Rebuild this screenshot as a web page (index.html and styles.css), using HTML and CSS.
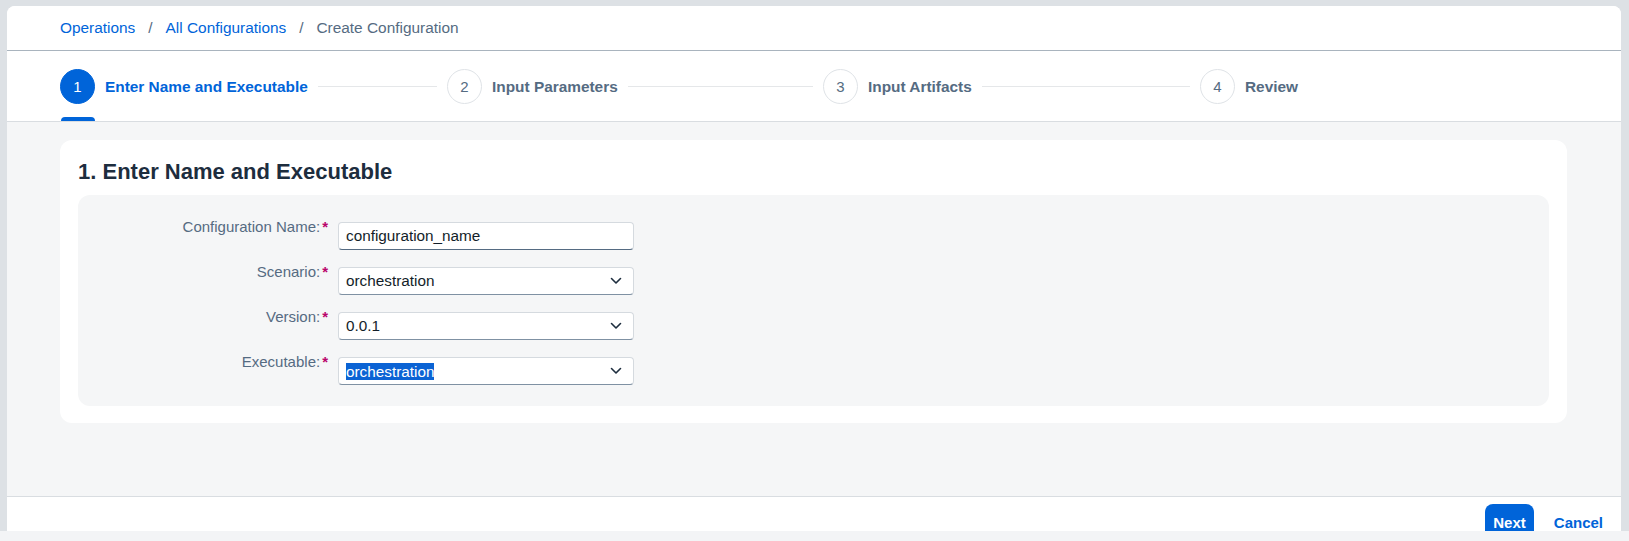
FILE: index.html
```html
<!DOCTYPE html>
<html lang="en">
<head>
<meta charset="utf-8">
<title>Create Configuration</title>
<link rel="stylesheet" href="styles.css">
</head>
<body>
<div class="screen">
  <div class="window">
    <div class="panel">
      <header class="head">
        <nav class="crumbs">
          <a class="crumb-link">Operations</a><span class="sep">/</span><a class="crumb-link">All Configurations</a><span class="sep">/</span><span class="crumb-current">Create Configuration</span>
        </nav>
        <div class="stepper">
          <div class="step active">
            <span class="num">1</span><span class="step-label">Enter Name and Executable</span><span class="line"></span>
            <span class="indicator"></span>
          </div>
          <div class="step">
            <span class="num">2</span><span class="step-label">Input Parameters</span><span class="line"></span>
          </div>
          <div class="step">
            <span class="num">3</span><span class="step-label">Input Artifacts</span><span class="line"></span>
          </div>
          <div class="step">
            <span class="num">4</span><span class="step-label">Review</span>
          </div>
        </div>
      </header>
      <main class="content">
        <section class="card">
          <h2 class="title">1. Enter Name and Executable</h2>
          <div class="form">
            <div class="row">
              <label class="lbl">Configuration Name:<span class="req">*</span></label>
              <div class="field input"><span class="val">configuration_name</span></div>
            </div>
            <div class="row">
              <label class="lbl">Scenario:<span class="req">*</span></label>
              <div class="field select"><span class="val">orchestration</span>
                <svg class="chev" width="12" height="8" viewBox="0 0 12 8"><path d="M1.5 1.5 L6 6 L10.5 1.5" fill="none" stroke="#1d2d3e" stroke-width="1.6" stroke-linecap="round" stroke-linejoin="round"/></svg>
              </div>
            </div>
            <div class="row">
              <label class="lbl">Version:<span class="req">*</span></label>
              <div class="field select"><span class="val">0.0.1</span>
                <svg class="chev" width="12" height="8" viewBox="0 0 12 8"><path d="M1.5 1.5 L6 6 L10.5 1.5" fill="none" stroke="#1d2d3e" stroke-width="1.6" stroke-linecap="round" stroke-linejoin="round"/></svg>
              </div>
            </div>
            <div class="row">
              <label class="lbl">Executable:<span class="req">*</span></label>
              <div class="field select"><span class="val selected">orchestration</span>
                <svg class="chev" width="12" height="8" viewBox="0 0 12 8"><path d="M1.5 1.5 L6 6 L10.5 1.5" fill="none" stroke="#1d2d3e" stroke-width="1.6" stroke-linecap="round" stroke-linejoin="round"/></svg>
              </div>
            </div>
          </div>
        </section>
      </main>
      <footer class="foot">
        <button class="btn btn-primary">Next</button>
        <button class="btn btn-ghost">Cancel</button>
      </footer>
    </div>
  </div>
  <div class="bottom-strip"></div>
</div>
</body>
</html>
```
FILE: styles.css
```css
* { box-sizing: border-box; }

html, body {
  margin: 0;
  padding: 0;
}

body {
  font-family: "Liberation Sans", Arial, sans-serif;
  background: #f3f4f6;
  color: #131e29;
}

.screen {
  width: 1629px;
  height: 541px;
  overflow: hidden;
  display: flex;
  flex-direction: column;
}

.window {
  height: 531px;
  background: #dde1e5;
  padding: 6px 8px 0 7px;
  flex-shrink: 0;
}

.bottom-strip {
  flex: 1;
  background: #f3f4f6;
}

.panel {
  height: 525px;
  background: #ffffff;
  border-radius: 8px 8px 0 0;
  overflow: hidden;
  display: flex;
  flex-direction: column;
}

/* Header */
.head {
  background: #ffffff;
  border-bottom: 1px solid #d9dde1;
  flex-shrink: 0;
}

.crumbs {
  height: 45px;
  border-bottom: 1px solid #a9b4be;
  display: flex;
  align-items: center;
  padding: 0 53px 1px 53px;
  font-size: 15.4px;
}

.crumb-link {
  color: #0064d9;
  text-decoration: none;
}

.sep {
  color: #556b82;
  margin: 0 13px;
}

.crumb-current {
  color: #556b82;
}

.stepper {
  height: 70px;
  padding: 0 53px;
  display: grid;
  grid-template-columns: 387px 376px 377px 1fr;
}

.step {
  position: relative;
  display: flex;
  align-items: center;
  height: 70px;
  padding-top: 1px;
}

.num {
  width: 35px;
  height: 35px;
  border-radius: 50%;
  border: 1px solid #dfe3e7;
  display: flex;
  align-items: center;
  justify-content: center;
  font-size: 15px;
  color: #556b82;
  flex-shrink: 0;
}

.step-label {
  margin-left: 10px;
  font-size: 15.4px;
  font-weight: bold;
  color: #556b82;
  white-space: nowrap;
}

.line {
  flex: 1;
  height: 1px;
  background: #e5e7e9;
  margin: 0 10px;
}

.step.active .num {
  background: #0064d9;
  border-color: #0064d9;
  color: #ffffff;
}

.step.active .step-label {
  color: #0064d9;
}

.indicator {
  position: absolute;
  left: 1px;
  bottom: 0;
  width: 34px;
  height: 4px;
  background: #0064d9;
  border-radius: 4px 4px 0 0;
}

/* Content */
.content {
  height: 374px;
  flex-shrink: 0;
  background: #f5f6f7;
  padding: 18px 54px 0 53px;
}

.card {
  background: #ffffff;
  border-radius: 12px;
  padding: 18px 18px 17px 18px;
}

.title {
  margin: 0 0 10px 0;
  font-size: 22px;
  line-height: 27px;
  font-weight: bold;
  color: #1d2d3e;
}

.form {
  background: #f5f6f7;
  border-radius: 12px;
  padding: 24px 0 21px 0;
  display: flex;
  flex-direction: column;
  gap: 14px;
}

.row {
  display: flex;
  align-items: flex-start;
  gap: 10px;
}

.lbl {
  width: 250px;
  text-align: right;
  font-size: 15px;
  line-height: 16px;
  color: #556b82;
}

.req {
  color: #ba066c;
  font-weight: bold;
  margin-left: 2px;
  font-size: 15px;
}

.field {
  margin-top: 3px;
  width: 296px;
  height: 28px;
  background: #ffffff;
  border: 1px solid #d5dadf;
  border-bottom-color: #7f91a3;
  border-radius: 4px;
  display: flex;
  align-items: center;
  padding: 0 8px 0 7px;
  font-size: 15.3px;
  color: #131e29;
}

.field.input {
  border-bottom-color: #556b82;
}

.val {
  flex: 1;
  white-space: nowrap;
}

.val.selected {
  flex: 0 0 auto;
  background: #0b63d4;
  color: #ffffff;
  line-height: 17px;
}

.field.select {
  justify-content: space-between;
}

.chev {
  flex-shrink: 0;
  margin-right: 3px;
}

/* Footer */
.foot {
  height: 60px;
  flex-shrink: 0;
  background: #ffffff;
  border-top: 1px solid #d9dde1;
  display: flex;
  justify-content: flex-end;
  align-items: flex-start;
  gap: 12px;
  padding: 7px 10px 0 0;
}

.btn {
  font-family: "Liberation Sans", Arial, sans-serif;
  font-size: 15px;
  font-weight: bold;
  height: 36px;
  border-radius: 8px;
  border: none;
  padding: 0 8px;
  cursor: pointer;
}

.btn-primary {
  background: #0064d9;
  color: #ffffff;
}

.btn-ghost {
  background: transparent;
  color: #0064d9;
}
```
